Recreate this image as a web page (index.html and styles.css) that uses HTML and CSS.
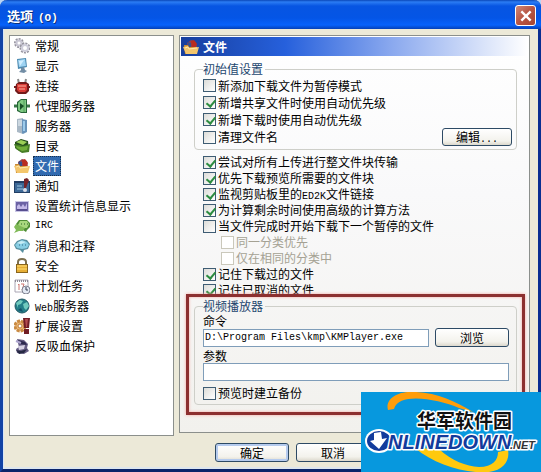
FILE: index.html
```html
<!DOCTYPE html>
<html lang="zh-CN">

<head>
    <title>选项</title>
    <meta charset="UTF-8">
    <meta name="viewport" content="width=device-width, initial-scale=1.0">
    <link rel="stylesheet" href="styles.css">
</head>

<body>
    <svg class="defs" aria-hidden="true">
        <symbol id="icon-folder" viewBox="0 0 16 16">
            <path d="M4 4l4-3 5 2 1 6H5z" fill="#8c4050"/>
            <path d="M8 2l3-1 3 4-2 4H9z" fill="#b92c20"/>
            <path d="M5 3l3 1v4H4z" fill="#39508e"/>
            <path d="M1 6h4l1 2h8v7H2z" fill="#c98932"/>
            <path d="M0 8l5-1 1 2 10-1-2 7H3z" fill="#f4c66c"/>
            <path d="M2 9l3-1 1 2 8-1" fill="none" stroke="#ffe9ad"/>
        </symbol>
    </svg>

    <div class="window">
        <header class="titlebar">
            <h1>选项<span class="latin">(O)</span></h1>
            <button class="close" type="button" aria-label="关闭">
                <svg viewBox="0 0 12 12"><path d="M2 2l8 8M10 2l-8 8" stroke="#fff" stroke-width="2"/></svg>
            </button>
        </header>

        <div class="main">
            <nav class="sidebar">
                <a href="#">
                    <svg viewBox="0 0 16 16"><g fill="none"><circle cx="5" cy="5" r="4" stroke="#96949f" stroke-width="2" stroke-dasharray="2 1"/><circle cx="5" cy="5" r="2.5" stroke="#c9c7d4" stroke-width="2"/><circle cx="11" cy="10" r="4.500" stroke="#96949f" stroke-width="2" stroke-dasharray="2 1"/><circle cx="11" cy="10" r="3" stroke="#cfcedb" stroke-width="2"/></g></svg>
                    <span>常规</span>
                </a>
                <a href="#">
                    <svg viewBox="0 0 16 16"><path d="M3 1l9-1 1 9-9 2z" fill="#4c8ab0"/><path d="M4 2l7-1 1 7-7 1z" fill="#9fd3f2"/><path d="M5 3l5-1-4 6z" fill="#d3efff"/><path d="M7 10l3-1 1 3 2 1-3 2-5-1 2-2z" fill="#728da5"/></svg>
                    <span>显示</span>
                </a>
                <a href="#">
                    <svg viewBox="0 0 16 16"><path d="M5 6L4 1M11 6l1-5" stroke="#8a8a8a" stroke-width="2"/><path d="M2 6l3-2h7l3 2v7l-3 3H4l-3-3z" fill="#721b1b"/><path d="M3 6h10v6l-2 2H5l-2-2z" fill="#d83b35"/><path d="M0 9h3M13 9h3" stroke="#721b1b" stroke-width="2"/><path d="M4 8h8M5 11h6" stroke="#ffb0a0"/></svg>
                    <span>连接</span>
                </a>
                <a href="#">
                    <svg viewBox="0 0 16 16"><path d="M0 8h16" stroke="#397648" stroke-width="3"/><path d="M3 4l4-3h6v14H7l-4-2z" fill="#266437"/><path d="M4 5l3-3h5v12H7l-3-2z" fill="#7ec982"/><path d="M10 2v12" stroke="#4f9c5b"/><path d="M6 5l4 3-4 4z" fill="#154d25"/></svg>
                    <span>代理服务器</span>
                </a>
                <a href="#">
                    <svg viewBox="0 0 16 16"><path d="M3 1l6-1v16l-6-2z" fill="#a9b8c5"/><path d="M8 1l5 1v12l-4 2-1-1z" fill="#6a94bb"/><path d="M4 3h4M4 5h4M4 7h4" stroke="#eef6fb"/><path d="M10 3v10" stroke="#9dcbeb" stroke-width="2"/></svg>
                    <span>服务器</span>
                </a>
                <a href="#">
                    <svg viewBox="0 0 16 16"><path d="M1 4l6-3 7 2 1 10-8 1-6-4z" fill="#254e1c"/><path d="M2 4l5-2 6 2-4 3z" fill="#9bcf56"/><path d="M0 6l6 1 3 1 7-2-1 8-7 1-6-4z" fill="#477e26"/><path d="M2 8l5 1 7-1-1 4-5 1-5-3z" fill="#70ae39"/></svg>
                    <span>目录</span>
                </a>
                <a href="#" class="active" aria-current="page">
                    <svg><use href="#icon-folder"/></svg>
                    <span>文件</span>
                </a>
                <a href="#">
                    <svg viewBox="0 0 16 16"><path d="M0 3h16v12H0z" fill="#223e64"/><path d="M1 5h14v9H1z" fill="#3d6997"/><path d="M3 8h5M3 11h6" stroke="#9fc9e3"/><path d="M10 1l3-1 2 2-3 8h-2z" fill="#762329"/><circle cx="11" cy="12" r="2" fill="#dbdde8"/></svg>
                    <span>通知</span>
                </a>
                <a href="#">
                    <svg viewBox="0 0 16 16"><path d="M1 3h14v11H1z" fill="#c9c6e5"/><path d="M2 4h12v9H2z" fill="#6b62a4"/><path d="M3 11V8l2-2 2 3 2-3 2 3 2-4v6z" fill="#c3b9e8"/><path d="M3 12h10" stroke="#443b7b"/></svg>
                    <span>设置统计信息显示</span>
                </a>
                <a href="#">
                    <svg viewBox="0 0 16 16"><path d="M5 2h8l3 3v4l-3 3-1 2-3-2-5-1-2-5z" fill="#4e8c35"/><path d="M6 3h7l2 3-2 4H7L4 7z" fill="#a8d77e"/><path d="M2 6L0 9l2 3-2 3 5-2h4l2-3" fill="#80ba58"/><path d="M7 6h1M10 6h1M13 6h1" stroke="#2c652a"/></svg>
                    <span class="latin">IRC</span>
                </a>
                <a href="#">
                    <svg viewBox="0 0 16 16"><path d="M3 3l5-2 5 1 3 4-2 5-4 1-1 3-3-3-4-1-2-4z" fill="#568e9f"/><path d="M4 4l4-2 5 2 2 3-2 3-5 1-5-1-2-3z" fill="#87cde3"/><path d="M3 5l4-2 5 1-5 2z" fill="#c9edf5"/><path d="M5 7h1M8 7h1M11 7h1" stroke="#316c88"/></svg>
                    <span>消息和注释</span>
                </a>
                <a href="#">
                    <svg viewBox="0 0 16 16"><path d="M4 8V4q0-3 4-3t4 3v4" fill="none" stroke="#7c7050" stroke-width="2"/><path d="M2 6h12v9H2z" fill="#8a651d"/><path d="M3 7h10v7H3z" fill="#e6ae35"/><path d="M3 8h10M3 11h10" stroke="#ffdf76"/></svg>
                    <span>安全</span>
                </a>
                <a href="#">
                    <svg viewBox="0 0 16 16"><path d="M1 2h13v12H1z" fill="#fff" stroke="#aaa6b4"/><path d="M1 3h13" stroke="#8e8894" stroke-width="2" stroke-dasharray="1 1"/><path d="M4 7l1-1v6M7 6h3l-2 6" fill="none" stroke="#cf7670"/><circle cx="12" cy="12" r="4" fill="#e2e8f2" stroke="#7f8291"/><path d="M12 9v3h2" fill="none" stroke="#353b50"/></svg>
                    <span>计划任务</span>
                </a>
                <a href="#">
                    <svg viewBox="0 0 16 16"><circle cx="8" cy="8" r="7" fill="#237e88" stroke="#245864"/><path d="M2 5l4-3 3 1-2 3-3 1v3zM9 6l4-2 2 4-3 4-2-2z" fill="#71cabe"/><path d="M4 12l3-2 2 4z" fill="#154f69"/></svg>
                    <span><span class="latin">Web</span>服务器</span>
                </a>
                <a href="#">
                    <svg viewBox="0 0 16 16"><circle cx="6" cy="8" r="5" fill="#edb774" stroke="#c98a42" stroke-width="3" stroke-dasharray="3 1"/><circle cx="6" cy="8" r="2" fill="#fff" stroke="#b97936"/><path d="M9 0h7l-1 10h-5zM10 11h5v5h-5z" fill="#711d25"/><path d="M11 1h3l-1 8h-1z" fill="#b34c50"/></svg>
                    <span>扩展设置</span>
                </a>
                <a href="#">
                    <svg viewBox="0 0 16 16"><path d="M3 1l7 1 4 4-1 4 2 3-5 3-7-1-1-4 3-2z" fill="#655c83"/><path d="M4 2l7 2 2 3-7-1z" fill="#2c294d"/><path d="M4 8l7-1-1 4-5 1z" fill="#d7d3e4"/><path d="M2 12l5 1 6-2-3 4-5 1z" fill="#252943"/><path d="M2 3l5 2" stroke="#aca4cd" stroke-width="2"/></svg>
                    <span>反吸血保护</span>
                </a>
            </nav>

            <form class="panel" id="options">
                <h2><svg><use href="#icon-folder"/></svg>文件</h2>

                <fieldset class="defaults">
                    <legend>初始值设置</legend>
                    <label><input type="checkbox">新添加下载文件为暂停模式</label>
                    <label><input type="checkbox" checked>新增共享文件时使用自动优先级</label>
                    <label><input type="checkbox" checked>新增下载时使用自动优先级</label>
                    <div class="row">
                        <label><input type="checkbox">清理文件名</label>
                        <button class="btn" type="button">编辑<span class="latin">...</span></button>
                    </div>
                </fieldset>

                <div class="checks">
                    <label><input type="checkbox" checked>尝试对所有上传进行整文件块传输</label>
                    <label><input type="checkbox" checked>优先下载预览所需要的文件块</label>
                    <label><input type="checkbox" checked><span>监视剪贴板里的<span class="latin">ED2K</span>文件链接</span></label>
                    <label><input type="checkbox" checked>为计算剩余时间使用高级的计算方法</label>
                    <label><input type="checkbox">当文件完成时开始下载下一个暂停的文件</label>
                    <label class="sub"><input type="checkbox" disabled>同一分类优先</label>
                    <label class="sub"><input type="checkbox" disabled>仅在相同的分类中</label>
                    <label><input type="checkbox" checked>记住下载过的文件</label>
                    <label><input type="checkbox" checked>记住已取消的文件</label>
                </div>

                <fieldset class="player">
                    <legend>视频播放器</legend>
                    <label class="caption" for="command">命令</label>
                    <div class="row">
                        <input class="text" id="command" type="text" value="D:\Program Files\kmp\KMPlayer.exe">
                        <button class="btn" type="button">浏览</button>
                    </div>
                    <label class="caption" for="args">参数</label>
                    <input class="text" id="args" type="text">
                    <label class="backup"><input type="checkbox">预览时建立备份</label>
                    <div class="highlight"></div>
                </fieldset>
            </form>
        </div>

        <footer class="actions">
            <button class="btn default" type="submit" form="options">确定</button>
            <button class="btn" type="button">取消</button>
        </footer>

        <div class="watermark">
            <svg viewBox="0 0 180 80" role="img" aria-label="华军软件园">
                <path d="M27 18C24 8 35 0 49 0C72-1 94 9 112 20L98 16C76 7 38 0 33 17z" fill="#ff9d0a"/>
                <path d="M54 56C74 73 105 82 128 80C143 78 149 68 147 58L137 60C137 68 132 75 118 75C105 74 91 69 78 57z" fill="#ffc90e"/>
                <text class="wm-cn" x="56" y="36">华军软件园</text>
                <ellipse cx="18" cy="49" rx="14" ry="12" fill="#fff"/>
                <ellipse cx="18" cy="49" rx="12" ry="10" fill="#123b9c"/>
                <path d="M13 41l7-1 1 7 5-1-8 11-9-8 4-1z" fill="#fff"/>
                <text class="wm-en" x="27" y="57">NLINEDOWN</text>
                <text class="wm-net" x="149" y="57">.NET</text>
            </svg>
        </div>
    </div>
</body>

</html>
```

FILE: styles.css
```css
* {
    box-sizing: border-box;
}

body {
    margin: 0;
    font: 12px/16px "Noto Sans CJK SC", sans-serif;
    color: #000;
    background: #b9d4f5;
}

.defs {
    display: none;
}

.latin {
    font-family: "Liberation Mono", monospace;
    font-size: 10px;
    line-height: 1;
}

/* window */
.window {
    position: relative;
    display: flex;
    flex-direction: column;
    min-height: 100vh;
    border: 3px solid #1243a5;
    border-top: 0;
    border-right-color: #0a2d91;
    border-bottom-color: #0a246a;
    border-radius: 7px 7px 0 0;
    background: #ece9d8;
}

.titlebar {
    display: flex;
    align-items: center;
    justify-content: space-between;
    height: 29px;
    margin: 0 -3px;
    padding: 2px 5px 0 7px;
    border-radius: 7px 7px 0 0;
    background: linear-gradient(#0a47b8 0, #2b7cf4 2px, #0755e2 6px, #0455e6 18px, #0762fb 25px, #0440b8 29px);
}

.titlebar h1 {
    margin: 0;
    font-size: 13px;
    font-weight: bold;
    color: #fff;
    text-shadow: 1px 1px #0b307d;
}

.titlebar .latin {
    margin-left: 5px;
    font-size: 11px;
}

.close {
    display: flex;
    align-items: center;
    justify-content: center;
    width: 21px;
    height: 21px;
    padding: 0;
    border: 1px solid #fff;
    border-radius: 3px;
    background: linear-gradient(135deg, #cf8878, #b75543 50%, #a64532);
}

.close svg {
    flex: none;
    width: 14px;
    height: 14px;
}

.main {
    display: flex;
    flex: 1;
    gap: 5px;
    padding: 6px 8px 0 5px;
    border-left: 1px solid #d9e6f7;
}

/* sidebar */
.sidebar {
    flex: 0 0 165px;
    border: 1px solid #8b8f8c;
    background: #fff;
}

.sidebar a {
    display: flex;
    align-items: center;
    gap: 3px;
    height: 20px;
    padding-left: 4px;
    color: #000;
    text-decoration: none;
}

.sidebar svg,
.panel h2 svg {
    width: 16px;
    height: 16px;
}

.sidebar a > span {
    padding: 0 2px;
}

.sidebar .active > span {
    padding: 1px;
    border: 1px dotted #17304f;
    background: #316ab0;
    color: #fff;
}

/* right panel */
.panel {
    flex: 1;
    margin-bottom: 3px;
    padding: 1px;
    border: 1px solid #8b8f8c;
    background: linear-gradient(#fff, #f9f9fa 40%, #f2f1ed);
}

.panel h2 {
    display: flex;
    align-items: center;
    gap: 4px;
    height: 19px;
    margin: 0;
    padding-left: 2px;
    font-size: 12px;
    color: #fff;
    background: linear-gradient(90deg, #173f9e, #2660dc 30%, #88a7ee 60%, #fff);
}

.panel fieldset {
    position: relative;
    min-width: 0;
    margin: 0 11px 0 13px;
    padding: 0 4px 3px 8px;
    border: 1px solid #cecfc9;
    border-radius: 4px;
}

.panel .defaults {
    margin-top: 5px;
}

.panel legend {
    padding: 0 2px 0 0;
    color: #23476f;
}

.panel label {
    display: flex;
    align-items: center;
    gap: 2px;
    height: 16px;
    white-space: nowrap;
}

.defaults label {
    height: 17px;
}

.checks {
    padding: 4px 0 0 22px;
}

.checks .sub {
    padding-left: 18px;
    color: #a5a294;
}

input[type="checkbox"] {
    appearance: none;
    position: relative;
    width: 13px;
    height: 13px;
    margin: 0;
    border: 1px solid #3e5c73;
    background: linear-gradient(135deg, #dcdcd8, #fff);
}

input[type="checkbox"]:checked::after {
    content: "";
    position: absolute;
    left: 4px;
    top: 1px;
    width: 4px;
    height: 7px;
    border: solid #2c8c40;
    border-width: 0 2px 2px 0;
    transform: rotate(40deg);
}

input[type="checkbox"]:disabled {
    border-color: #cac8bb;
    background: #fff;
}

.row {
    display: flex;
    align-items: center;
    justify-content: space-between;
    gap: 6px;
}

.btn {
    flex: none;
    width: 74px;
    height: 19px;
    padding: 0;
    border: 1px solid #2d4a65;
    border-radius: 3px;
    background: linear-gradient(#fff, #f3f2ec 75%, #dcd8cc);
    color: #000;
    font: inherit;
    line-height: 15px;
}

.defaults .btn {
    width: 70px;
    height: 18px;
}

.btn.default {
    box-shadow: inset 0 0 0 2px #b5cbee;
}

.panel .player {
    padding-right: 7px;
}

.panel .caption {
    height: 14px;
    line-height: 14px;
}

.text {
    display: block;
    width: 100%;
    height: 18px;
    padding: 0 1px;
    border: 1px solid #7f9db9;
    background: #fff;
    font: 10px "Liberation Mono", monospace;
}

.row + .caption {
    margin-top: 2px;
}

.backup {
    margin-top: 4px;
}

/* red frame around the player settings */
.highlight {
    position: absolute;
    inset: -20px -9px -11px -9px;
    border: 3px solid #8c2f2f;
    box-shadow: 0 0 3px #f5a5a0, inset 0 0 3px #f5a5a0;
    pointer-events: none;
}

.actions {
    display: flex;
    gap: 7px;
    padding: 7px 0 5px 211px;
    border-left: 1px solid #d9e6f7;
    border-bottom: 2px solid #dde6ee;
}

/* watermark */
.watermark {
    position: absolute;
    right: -3px;
    bottom: -3px;
    width: 180px;
    height: 80px;
    background: #0798de;
}

.watermark svg {
    display: block;
    width: 100%;
    height: 100%;
}

.watermark text {
    paint-order: stroke;
    stroke: #fff;
    stroke-width: 3px;
    stroke-linejoin: round;
}

.wm-cn {
    font: bold 19px "Noto Sans CJK SC", sans-serif;
    fill: #111;
}

.wm-en {
    font: italic bold 20px "Liberation Sans", sans-serif;
    fill: #123b9c;
}

.wm-net {
    font: italic bold 11px "Liberation Sans", sans-serif;
    fill: #333;
}
```
